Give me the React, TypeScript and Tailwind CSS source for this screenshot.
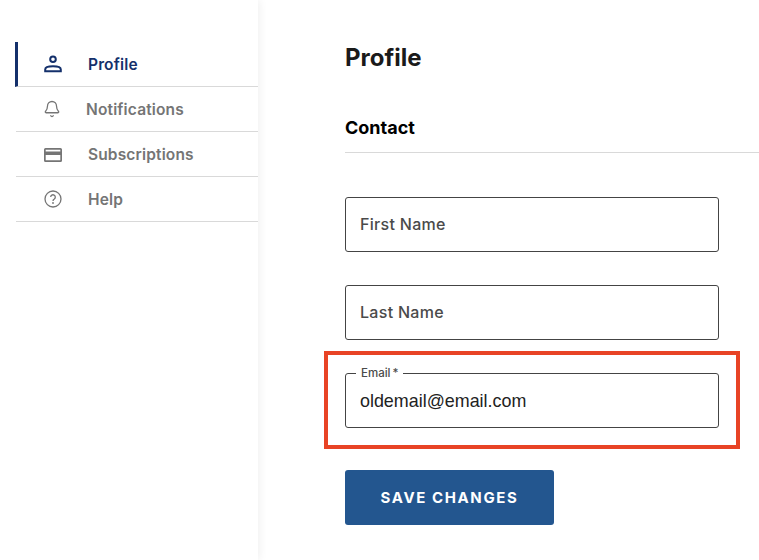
import { Bell } from "lucide-react";

function PersonIcon() {
	return (
		<svg width="18" height="18" viewBox="0 0 18 18" fill="none">
			<circle cx="9" cy="4.200" r="2.800" stroke="#14306b" strokeWidth="2" />
			<path
				d="M1.200 16.200v-1.700c0-2 3.800-3.200 7.800-3.200s7.800 1.200 7.800 3.200v1.700z"
				stroke="#14306b"
				strokeWidth="2"
			/>
		</svg>
	);
}

function CardIcon() {
	return (
		<svg width="18" height="14" viewBox="0 0 18 14">
			<path
				fillRule="evenodd"
				d="M1.500 0h15A1.500 1.500 0 0 1 18 1.500v11a1.500 1.500 0 0 1-1.500 1.500h-15A1.500 1.500 0 0 1 0 12.500v-11A1.500 1.500 0 0 1 1.500 0zM1.700 1.700v1.800h14.600V1.700zM1.700 7v5.300h14.600V7z"
				fill="#757575"
			/>
		</svg>
	);
}

function HelpIcon() {
	return (
		<svg width="18" height="18" viewBox="0 0 18 18" fill="none">
			<circle cx="9" cy="9" r="8" stroke="#757575" strokeWidth="1.300" />
			<path
				d="M6.700 7.100a2.300 2.300 0 1 1 3.600 1.900c-.8.500-1.300 1-1.300 1.900"
				stroke="#757575"
				strokeWidth="1.300"
			/>
			<circle cx="9" cy="13" r=".9" fill="#757575" />
		</svg>
	);
}

const navItems = [
	{ label: "Profile", icon: <PersonIcon />, active: true, iconClass: "", textClass: "ml-[26px]" },
	{
		label: "Notifications",
		icon: <Bell size={18} color="#757575" strokeWidth={1.7} />,
		active: false,
		iconClass: "-ml-px",
		textClass: "ml-[25px]",
	},
	{ label: "Subscriptions", icon: <CardIcon />, active: false, iconClass: "pt-[2px]", textClass: "ml-[26px]" },
	{ label: "Help", icon: <HelpIcon />, active: false, iconClass: "", textClass: "ml-[26px]" },
];

function Field({ label }: { label: string }) {
	return (
		<div className="flex h-[55px] w-[374px] items-center rounded-[3px] border border-[#444444] pb-[2px] pl-[14px] text-[16px] font-medium tracking-[0.3px] text-[#4a4a4a]">
			{label}
		</div>
	);
}

export default function App() {
	return (
		<div className="flex h-[560px] w-[759px] overflow-hidden bg-white font-['Inter','Liberation_Sans',sans-serif]">
			{/* Sidebar */}
			<aside className="h-full w-[258px] shrink-0 pt-[42px] pl-[15px] shadow-[2px_0_8px_rgba(0,0,0,0.06)]">
				{navItems.map((item) => (
					<div
						key={item.label}
						className={`flex h-[45px] items-center border-b border-[#d9d9d9] text-[15.500px] font-semibold tracking-[0.15px] ${
							item.active
								? "border-l-[3px] border-l-[#14306b] pl-[26px] text-[#14306b]"
								: "ml-px pl-[28px] text-[#757575]"
						}`}
					>
						<span className={`flex w-[18px] justify-center ${item.iconClass}`}>{item.icon}</span>
						<span className={`pt-[2px] ${item.textClass}`}>{item.label}</span>
					</div>
				))}
			</aside>

			{/* Main */}
			<main className="min-w-0 flex-1 pt-[42px] pl-[87px]">
				<h1 className="text-[24px] leading-[32px] font-bold text-[#1a1a1a]">Profile</h1>
				<h2 className="mt-[42px] text-[18px] leading-[24px] font-bold text-black">Contact</h2>
				<div className="mt-[12px] border-b border-[#d9d9d9]" />

				<div className="mt-[44px] flex flex-col gap-[33px]">
					<Field label="First Name" />
					<Field label="Last Name" />
				</div>

				{/* Highlighted email field */}
				<div className="mt-[11px] -ml-[21px] w-[416px] border-[4px] border-[#e84325] px-[17px] pt-[18px] pb-[17px]">
					<div className="relative flex h-[55px] w-[374px] items-center rounded-[3px] border border-[#444444] pt-[2px] pl-[14px] font-['Liberation_Sans',sans-serif] text-[17.900px] text-[#222222]">
						oldemail@email.com
						<span className="absolute -top-[8px] left-[10px] bg-white px-[5px] font-['Inter',sans-serif] text-[11.500px] leading-[14px] font-medium text-[#4a4a4a]">
							Email<span className="ml-[2px]">*</span>
						</span>
					</div>
				</div>

				<button className="mt-[21px] flex h-[55px] w-[209px] items-center justify-center rounded-[3px] bg-[#23568f] pt-[2px] text-[15px] font-bold tracking-[1.600px] text-white">
					SAVE CHANGES
				</button>
			</main>
		</div>
	);
}
